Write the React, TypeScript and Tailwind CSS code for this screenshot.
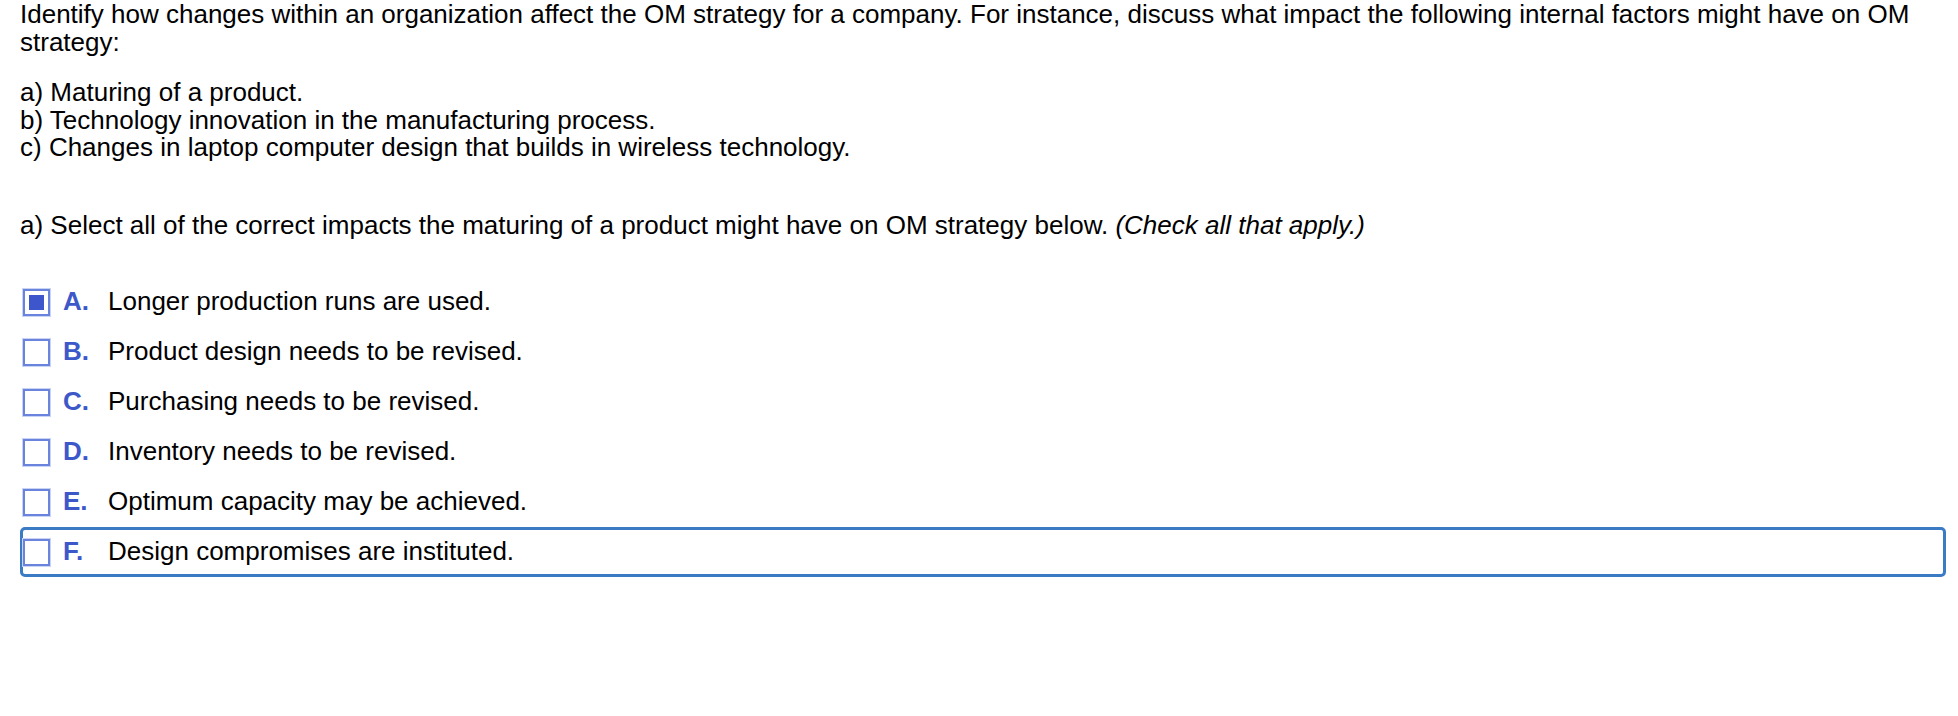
import React from "react";

const options = [
  { key: "A", label: "Longer production runs are used.", checked: true },
  { key: "B", label: "Product design needs to be revised.", checked: false },
  { key: "C", label: "Purchasing needs to be revised.", checked: false },
  { key: "D", label: "Inventory needs to be revised.", checked: false },
  { key: "E", label: "Optimum capacity may be achieved.", checked: false },
  { key: "F", label: "Design compromises are instituted.", checked: false },
];

function Checkbox({ checked }: { checked: boolean }) {
  return (
    <span className="flex h-[27px] w-[27px] shrink-0 items-center justify-center border-2 border-[#6a83dc] bg-white shadow-[0_0_0_1px_#c9d3f3]">
      {checked && <span className="block h-[15px] w-[15px] bg-[#3d56cc]" />}
    </span>
  );
}

export default function App() {
  const focused = "F";

  return (
    <div className="min-h-[716px] bg-white pl-[20px] pr-[12px] pt-[1px] font-['Liberation_Sans',Arial,sans-serif] text-[26px] leading-[27.5px] text-black">
      <p>
        Identify how changes within an organization affect the OM strategy for a company. For instance, discuss what
        impact the following internal factors might have on OM
        <br />
        strategy:
      </p>
      <p className="mt-[23px]">
        a) Maturing of a product.
        <br />
        b) Technology innovation in the manufacturing process.
        <br />
        c) Changes in laptop computer design that builds in wireless technology.
      </p>
      <p className="mt-[50px]">
        a) Select all of the correct impacts the maturing of a product might have on OM strategy below.{" "}
        <i>(Check all that apply.)</i>
      </p>

      <div className="mt-[38px] flex flex-col">
        {options.map((opt) => (
          <div
            key={opt.key}
            className={
              opt.key === focused
                ? "flex h-[50px] items-center rounded-[5px] border-[3px] border-[#3a7bc4]"
                : "flex h-[50px] items-center rounded-[5px] border-[3px] border-transparent"
            }
          >
            <Checkbox checked={opt.checked} />
            <span className="ml-[13px] w-[45px] shrink-0 font-bold text-[#3d58c9]">{opt.key}.</span>
            <span>{opt.label}</span>
          </div>
        ))}
      </div>
    </div>
  );
}
